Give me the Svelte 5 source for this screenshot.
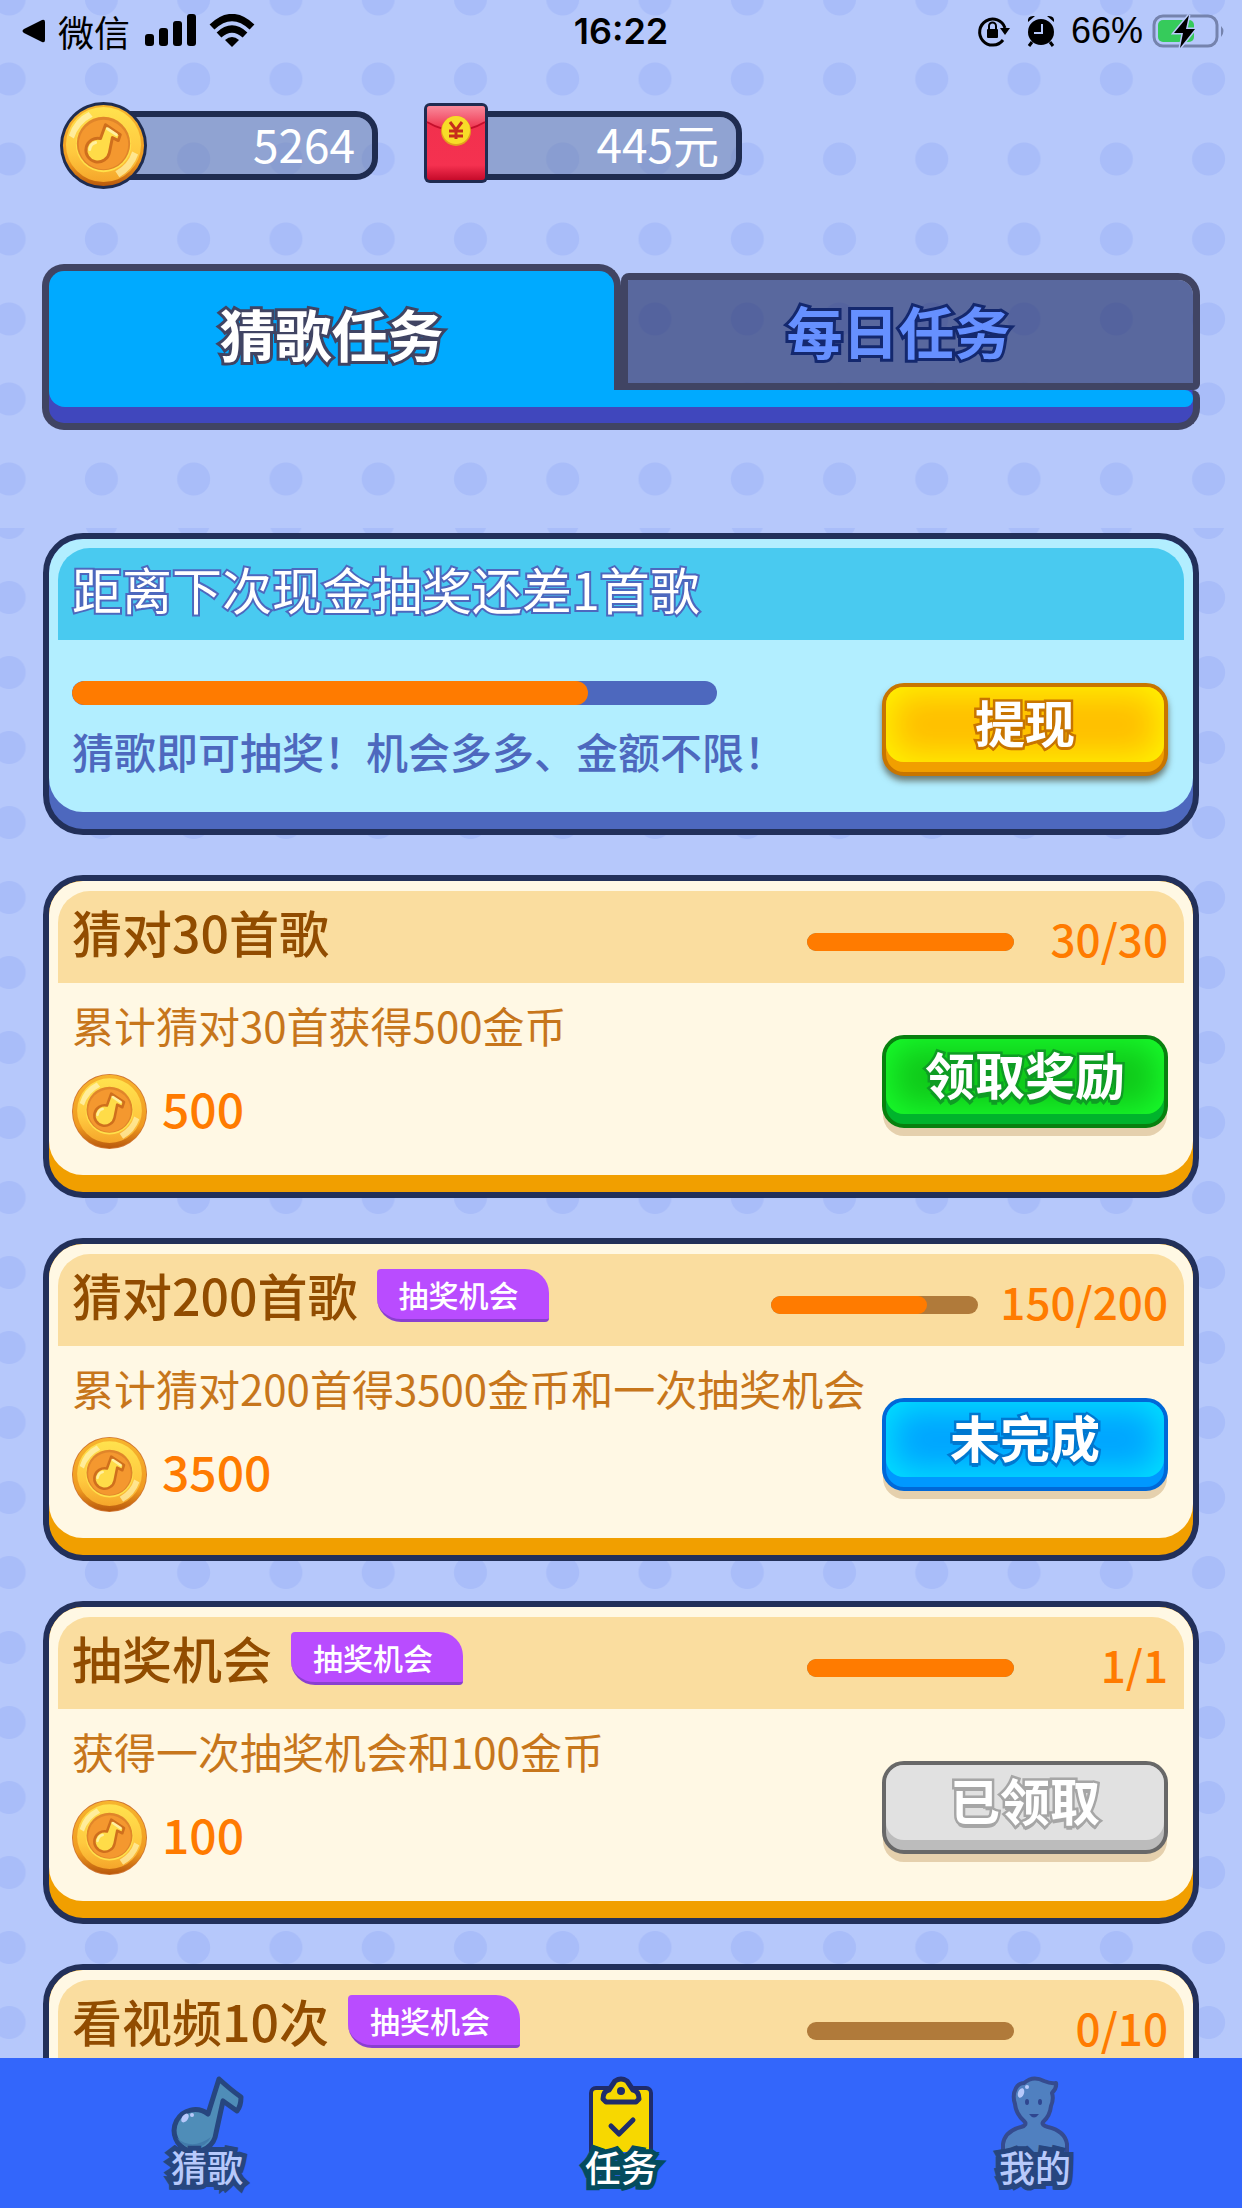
<script>
  let activeTab = $state("songs");

  const tasks = [
    {
      title: "猜对30首歌",
      desc: "累计猜对30首获得500金币",
      coins: 500,
      done: 30,
      total: 30,
      draw: false,
      action: "领取奖励",
      color: "green",
    },
    {
      title: "猜对200首歌",
      desc: "累计猜对200首得3500金币和一次抽奖机会",
      coins: 3500,
      done: 150,
      total: 200,
      draw: true,
      action: "未完成",
      color: "blue",
    },
    {
      title: "抽奖机会",
      desc: "获得一次抽奖机会和100金币",
      coins: 100,
      done: 1,
      total: 1,
      draw: true,
      action: "已领取",
      color: "grey",
    },
    {
      title: "看视频10次",
      done: 0,
      total: 10,
      draw: true,
    },
  ];
</script>

{#snippet coin(rim)}
  <svg class="coin" viewBox="0 0 88 88" aria-hidden="true">
    <circle cx="44" cy="44" r="44" fill={rim} />
    <circle cx="44" cy="44" r={rim === "#1f2c50" ? 41 : 43} fill="url(#coin-edge)" />
    <circle cx="44" cy="43" r="38" fill="url(#coin-face)" />
    <path d="M9 34 Q14 17 29 10 L33 15 Q19 22 14 37 Z" fill="#fff3b0" opacity="0.8" />
    <path d="M79 53 Q74 68 60 76 L56 70 Q69 63 73 50 Z" fill="#fff3b0" opacity="0.7" />
    <circle cx="44" cy="43" r="28" fill="#ffe04a" />
    <circle cx="44" cy="42" r="27" fill="#e0852a" />
    <circle cx="44" cy="43" r="25" fill="#f4982f" />
    <path
      d="M46 23 L61 33 L59 39 L53 36 L50 51 A12 12 0 1 1 41 37 Z"
      fill="#ffdc48"
      stroke="#cf6f1d"
      stroke-width="3"
      stroke-linejoin="round"
    />
    <path d="M30 48 Q31 42 36 41" fill="none" stroke="#fff0a0" stroke-width="3" stroke-linecap="round" />
    <path d="M48 27 L57 33" stroke="#fff0a0" stroke-width="3" stroke-linecap="round" />
  </svg>
{/snippet}

{#snippet bar(value, max, label)}
  <div
    class="bar"
    role="progressbar"
    aria-label={label}
    aria-valuenow={value}
    aria-valuemin="0"
    aria-valuemax={max}
  >
    <div class="fill" style="width: {(value / max) * 100}%"></div>
  </div>
{/snippet}

<svg class="defs" aria-hidden="true">
  <linearGradient id="coin-edge" x1="0" y1="0" x2="0" y2="1">
    <stop offset="0" stop-color="#f7b52e" />
    <stop offset="0.7" stop-color="#f09a20" />
    <stop offset="1" stop-color="#b9590c" />
  </linearGradient>
  <linearGradient id="coin-face" x1="0" y1="0" x2="0" y2="1">
    <stop offset="0" stop-color="#ffe24e" />
    <stop offset="0.6" stop-color="#ffc93f" />
    <stop offset="1" stop-color="#f5a52a" />
  </linearGradient>
  <linearGradient id="packet" x1="0" y1="0" x2="0" y2="1">
    <stop offset="0" stop-color="#f0304c" />
    <stop offset="0.8" stop-color="#f53150" />
    <stop offset="1" stop-color="#c60a2a" />
  </linearGradient>
  <linearGradient id="flap" x1="0" y1="0" x2="0" y2="1">
    <stop offset="0" stop-color="#f98a9b" />
    <stop offset="1" stop-color="#ee2c48" />
  </linearGradient>
</svg>

<div class="app">
  <header>
    <div class="status">
      <div class="side">
        <svg class="back" viewBox="0 0 24 24" aria-hidden="true">
          <path d="M2 10 L20 1 Q23 0 23 3 V21 Q23 24 20 23 L2 14 Q-1 12 2 10 Z" />
        </svg>
        <span>微信</span>
        <svg class="signal" viewBox="0 0 52 34" aria-hidden="true">
          <rect x="0" y="20" width="9" height="12" rx="3" />
          <rect x="14" y="14" width="9" height="18" rx="3" />
          <rect x="28" y="7" width="9" height="25" rx="3" />
          <rect x="42" y="0" width="9" height="32" rx="3" />
        </svg>
        <svg class="wifi" viewBox="0 0 46 34" aria-hidden="true">
          <g fill="none" stroke="#000" stroke-width="7">
            <path d="M3 13 Q23 -6 43 13" />
            <path d="M10 21 Q23 9 36 21" />
          </g>
          <path d="M16 26 Q23 20 30 26 L23 33 Z" />
        </svg>
      </div>
      <time>16:22</time>
      <div class="side end">
        <svg class="lock" viewBox="0 0 34 32" aria-hidden="true">
          <path d="M26 25 A13 13 0 1 1 28 13" fill="none" stroke="#000" stroke-width="3" />
          <path d="M23 13 H33 L28 20 Z" />
          <rect x="10" y="14" width="11" height="9" rx="1" />
          <path d="M12 14 V11 A3 3 0 0 1 19 11 V14" fill="none" stroke="#000" stroke-width="2" />
        </svg>
        <svg class="alarm" viewBox="0 0 28 32" aria-hidden="true">
          <circle cx="14" cy="17" r="13" />
          <path d="M1 7 Q0 0 8 1 Z M27 7 Q28 0 20 1 Z" />
          <path d="M5 27 L2 31 M23 27 L26 31" stroke="#000" stroke-width="3" />
          <path d="M15 9 V18 H7" fill="none" stroke="#b7c9fb" stroke-width="2" />
        </svg>
        <span class="percent">66%</span>
        <svg class="battery" viewBox="0 0 74 36" aria-hidden="true">
          <rect x="2" y="3" width="63" height="30" rx="9" fill="none" stroke="#7583ad" stroke-width="3" />
          <path d="M69 13 Q74 18 69 24 Z" fill="#7583ad" />
          <rect x="6" y="7" width="36" height="22" rx="5" fill="#36cb5b" />
          <path
            d="M37 2 L22 20 H31 L28 35 L43 16 H34 Z"
            stroke="#b7c9fb"
            stroke-width="3"
            paint-order="stroke"
          />
        </svg>
      </div>
    </div>

    <div class="wallets">
      <div class="wallet">
        {@render coin("#1f2c50")}
        <span class="amount">5264</span>
      </div>
      <div class="wallet">
        <svg class="packet" viewBox="0 0 64 80" aria-hidden="true">
          <rect x="0" y="0" width="64" height="80" rx="6" fill="#1f2c50" />
          <rect x="3" y="3" width="58" height="74" rx="3" fill="url(#packet)" />
          <path d="M3 6 Q3 3 6 3 H58 Q61 3 61 6 V19 Q32 36 3 19 Z" fill="url(#flap)" />
          <path d="M3 19 Q32 36 61 19" fill="none" stroke="#c40f2c" stroke-width="2" />
          <circle cx="32" cy="28" r="15" fill="#e2a21c" />
          <circle cx="32" cy="27" r="14" fill="#f8dc28" />
          <path
            d="M26 19 L32 27 L38 19 M32 27 V36 M25 28 H39 M25 33 H39"
            fill="none"
            stroke="#c62d1c"
            stroke-width="3"
          />
        </svg>
        <span class="amount">445元</span>
      </div>
    </div>

    <div class="tabs">
      <div class="tablist" role="tablist">
        <button
          class="tab"
          class:active={activeTab === "songs"}
          role="tab"
          aria-selected={activeTab === "songs"}
          onclick={() => (activeTab = "songs")}>猜歌任务</button
        >
        <button
          class="tab"
          class:active={activeTab === "daily"}
          role="tab"
          aria-selected={activeTab === "daily"}
          onclick={() => (activeTab = "daily")}>每日任务</button
        >
      </div>
      <div class="shelf"><div></div></div>
    </div>
  </header>

  <main>
    <section class="card cash">
      <div class="face">
        <div class="head"><h2>距离下次现金抽奖还差1首歌</h2></div>
        <div class="body">
          <div class="info">
            {@render bar(4, 5, "抽奖进度")}
            <p>猜歌即可抽奖！机会多多、金额不限！</p>
          </div>
          <button class="action yellow"><span>提现</span></button>
        </div>
      </div>
    </section>

    {#each tasks as task}
      <section class="card">
        <div class="face">
          <div class="head">
            <h2>{task.title}</h2>
            {#if task.draw}
              <span class="badge">抽奖机会</span>
            {/if}
            <div class="progress">
              {@render bar(task.done, task.total, task.title)}
              <span class="count">{task.done}/{task.total}</span>
            </div>
          </div>
          {#if task.desc}
            <div class="body">
              <div class="info">
                <p>{task.desc}</p>
                <div class="reward">
                  {@render coin("#cf7430")}
                  <span>{task.coins}</span>
                </div>
              </div>
              <button class="action {task.color}"><span>{task.action}</span></button>
            </div>
          {/if}
        </div>
      </section>
    {/each}
  </main>

  <nav>
    <a href="#guess">
      <svg class="note" viewBox="0 0 74 76" aria-hidden="true">
        <path
          d="M49 3 Q61 14 71 21 Q71 30 67 35 L53 25 L46 57 A21 21 0 1 1 38 38 Z"
          fill="#4f8db8"
          stroke="#27467f"
          stroke-width="5"
          stroke-linejoin="round"
        />
        <path d="M7 62 Q22 75 41 61 Q36 71 24 72 Q13 72 7 62" fill="#427bab" />
        <ellipse cx="15" cy="42" rx="3" ry="5" fill="#b7c9fb" transform="rotate(35 15 42)" />
        <circle cx="22" cy="39" r="2" fill="#b7c9fb" />
      </svg>
      <span>猜歌</span>
    </a>
    <a href="#tasks" class="current" aria-current="page">
      <svg class="board" viewBox="0 0 64 76" aria-hidden="true">
        <rect x="2" y="12" width="60" height="70" rx="5" fill="#f7d800" stroke="#1f2c6b" stroke-width="4" />
        <path
          d="M14 23 Q14 15 20 14 L26 5 Q32 1 38 5 L44 14 Q50 15 50 23 L47 26 H17 Z"
          fill="#f7d800"
          stroke="#1f2c6b"
          stroke-width="5"
          stroke-linejoin="round"
        />
        <circle cx="32" cy="15" r="4" fill="#1f2c6b" />
        <path
          d="M22 50 L30 58 L44 44"
          fill="none"
          stroke="#1f2c6b"
          stroke-width="5"
          stroke-linecap="round"
          stroke-linejoin="round"
        />
      </svg>
      <span>任务</span>
    </a>
    <a href="#me">
      <svg class="person" viewBox="0 0 68 76" aria-hidden="true">
        <path
          d="M2 78 V68 Q4 55 20 51 Q27 49 23 45 Q15 38 14 28 Q11 19 15 12 Q18 7 23 7 Q32 -1 43 5 Q50 8 55 7 Q56 12 51 17 Q53 23 50 30 Q49 40 42 46 Q40 49 47 51 Q64 55 66 68 V78 Z"
          fill="#5080c0"
          stroke="#354b8f"
          stroke-width="4"
          stroke-linejoin="round"
        />
        <ellipse cx="26" cy="26" rx="2" ry="3" fill="#2f4690" />
        <ellipse cx="39" cy="26" rx="2" ry="3" fill="#2f4690" />
        <path d="M28 38 H38 Q33 45 28 38 Z" fill="#2f4690" />
        <ellipse cx="20" cy="17" rx="3" ry="5" fill="#b7c9fb" transform="rotate(20 20 17)" />
        <circle cx="26" cy="11" r="2" fill="#b7c9fb" />
      </svg>
      <span>我的</span>
    </a>
  </nav>
</div>

<style>
  :global(body) {
    margin: 0;
  }
  .defs {
    position: absolute;
    width: 0;
    height: 0;
  }
  .app {
    height: 100vh;
    display: flex;
    flex-direction: column;
    overflow: hidden;
    font-family: "Noto Sans CJK SC", sans-serif;
    background-color: #b6c8fb;
  }
  .app * {
    box-sizing: border-box;
  }
  header,
  main {
    background-color: #b6c8fb;
    background-image: radial-gradient(circle, #a9bdf9 16px, transparent 17px);
    background-size: 7.43% 80px;
    background-position: -37px 39px;
  }
  header {
    flex: none;
    padding-bottom: 98px;
  }

  .status {
    display: flex;
    align-items: center;
    height: 62px;
    padding: 0 16px;
    font-size: 36px;
    line-height: 40px;
  }
  .side {
    flex: 1;
    display: flex;
    align-items: center;
  }
  .end {
    justify-content: flex-end;
  }
  .back {
    width: 24px;
    height: 24px;
    margin: 0 12px 0 6px;
  }
  .signal {
    width: 52px;
    height: 34px;
    margin: 0 12px 0 15px;
  }
  .wifi {
    width: 46px;
    height: 34px;
  }
  time {
    font-family: Inter, sans-serif;
    font-weight: 600;
  }
  .lock {
    width: 34px;
    height: 32px;
    margin-right: 16px;
  }
  .alarm {
    width: 28px;
    height: 32px;
    margin-right: 16px;
  }
  .percent {
    font-family: "Liberation Sans", sans-serif;
  }
  .battery {
    width: 74px;
    height: 36px;
    margin-left: 9px;
  }

  .wallets {
    display: flex;
    gap: 46px;
    padding: 40px 60px 0;
  }
  .wallet {
    display: flex;
    align-items: center;
    width: 318px;
    height: 87px;
  }
  .wallet .coin {
    width: 87px;
    height: 87px;
  }
  .wallet svg {
    position: relative;
    z-index: 1;
    flex: none;
  }
  .wallet .packet {
    width: 64px;
    height: 80px;
    margin-bottom: 6px;
  }
  .amount {
    flex: 1;
    height: 69px;
    margin-left: -20px;
    padding-right: 17px;
    border: 6px solid #1f2c50;
    border-radius: 0 22px 22px 0;
    background: rgba(98, 118, 160, 0.45);
    background-clip: padding-box;
    color: #fff;
    font-size: 46px;
    line-height: 52px;
    text-align: right;
  }

  .tabs {
    margin: 75px 42px 0;
  }
  .tablist {
    display: flex;
    align-items: flex-end;
    height: 126px;
  }
  .tab {
    flex: none;
    width: 50%;
    height: 117px;
    margin: 0;
    padding: 0 24px 4px 0;
    border: 7px solid #404463;
    border-radius: 8px 22px 6px 0;
    background: rgba(22, 34, 92, 0.58);
    background-clip: padding-box;
    color: #6690ff;
    font-family: inherit;
    font-size: 56px;
    font-weight: 700;
    line-height: 64px;
    -webkit-text-stroke: 6px #14286e;
    paint-order: stroke fill;
  }
  .tab.active {
    height: 126px;
    padding: 4px 0 0;
    border-bottom: 0;
    border-radius: 22px 22px 0 0;
    background: #00aaff;
    color: #fff;
    -webkit-text-stroke-color: #404463;
  }
  .shelf {
    height: 40px;
    border: 7px solid #404463;
    border-top: 0;
    border-radius: 0 8px 22px 22px;
    background: #4047bd;
  }
  .shelf div {
    height: 17px;
    border-radius: 0 8px 8px 16px;
    background: #00aaff;
  }

  main {
    flex: 1;
    min-height: 0;
    overflow: hidden;
    display: flex;
    flex-direction: column;
    gap: 40px;
    padding: 5px 43px 0;
    background-size: 7.43% 75px;
    background-position: -37px -43px;
  }
  .card {
    flex: none;
    padding-bottom: 17px;
    border: 6px solid #22305a;
    border-radius: 40px;
    background: #f19f00;
  }
  .face {
    height: 294px;
    padding: 10px 9px 0;
    border-radius: 34px;
    background: #fff8e4;
  }
  .head {
    display: flex;
    align-items: center;
    height: 92px;
    padding: 0 16px 0 14px;
    border-radius: 32px 32px 0 0;
    background: #fadd9f;
  }
  h2 {
    margin: 0;
    padding-bottom: 12px;
    color: #914c00;
    font-size: 50px;
    font-weight: 500;
    line-height: 60px;
    white-space: nowrap;
  }
  .badge {
    height: 53px;
    margin: 0 0 10px 19px;
    padding: 0 30px 0 22px;
    border-bottom: 3px solid #8a3fd0;
    border-radius: 4px 24px 4px 24px;
    background: #b94cff;
    color: #fff;
    font-size: 30px;
    font-weight: 500;
    line-height: 50px;
  }
  .progress {
    display: flex;
    align-items: center;
    margin-left: auto;
    padding-top: 10px;
  }
  .bar {
    width: 207px;
    height: 18px;
    border-radius: 9px;
    overflow: hidden;
    background: #b07a3a;
  }
  .fill {
    height: 100%;
    border-radius: inherit;
    background: #ff7b00;
  }
  .count {
    min-width: 132px;
    margin-left: 22px;
    padding-bottom: 8px;
    color: #ff7b00;
    font-size: 44px;
    font-weight: 500;
    line-height: 48px;
    text-align: right;
  }
  .body {
    display: flex;
    align-items: flex-start;
    justify-content: space-between;
    padding: 12px 16px 0 14px;
  }
  p {
    margin: 0;
    color: #c7761b;
    font-size: 42px;
    line-height: 60px;
    white-space: nowrap;
  }
  .reward {
    display: flex;
    align-items: center;
    gap: 15px;
    margin-top: 19px;
    color: #ff7b00;
    font-size: 48px;
    font-weight: 500;
    line-height: 60px;
  }
  .reward span {
    padding-bottom: 10px;
  }
  .reward .coin {
    width: 75px;
    height: 75px;
  }

  .cash {
    background: #4d68be;
  }
  .cash .face {
    height: 273px;
    padding-top: 9px;
    background: #b2eeff;
  }
  .cash .head {
    background: #49caf0;
  }
  .cash h2 {
    color: #fff;
    font-weight: 400;
    -webkit-text-stroke: 4px #4d68be;
    paint-order: stroke fill;
  }
  .cash .body {
    padding-top: 41px;
  }
  .cash .bar {
    width: 645px;
    height: 24px;
    margin-bottom: 16px;
    border-radius: 12px;
    background: #4d68be;
  }
  .cash p {
    color: #4d68be;
    font-weight: 500;
  }

  .action {
    flex: none;
    width: 286px;
    margin: 40px 0 0;
    padding: 0 0 10px;
    border: 4px solid;
    border-radius: 22px;
    color: #fff;
    font-family: inherit;
    font-size: 50px;
    font-weight: 700;
    box-shadow: 0 9px 0 -1px #e5d0ad;
  }
  .action span {
    display: block;
    height: 75px;
    border-radius: 18px;
    line-height: 68px;
    paint-order: stroke fill;
    -webkit-text-stroke: 5px;
  }
  .action.yellow {
    margin-top: 2px;
    border-color: #c87500;
    background: #f19f00;
    box-shadow: 0 5px 6px rgba(60, 50, 30, 0.6);
  }
  .yellow span {
    background: #ffbe00;
    box-shadow: inset 0 0 34px 6px #fff600;
    -webkit-text-stroke-color: #c87500;
    text-shadow: 0 3px 0 #c87500;
  }
  .green {
    border-color: #08800f;
    background: #00b42c;
  }
  .green span {
    background: #10c81a;
    box-shadow: inset 0 0 34px 6px #18ff2c;
    -webkit-text-stroke-color: #0f9c24;
    text-shadow: 0 5px 0 #0f9c24;
  }
  .blue {
    border-color: #0068d8;
    background: #0098ff;
  }
  .blue span {
    background: #00a4ff;
    box-shadow: inset 0 0 34px 6px #00e4ff;
    -webkit-text-stroke-color: #0078d0;
    text-shadow: 0 4px 0 #0078d0;
  }
  .grey {
    border-color: #686868;
    background: #bcbcbc;
  }
  .grey span {
    background: #e1e1e1;
    -webkit-text-stroke-color: #a6a6a6;
    text-shadow: 0 4px 0 #a6a6a6;
  }

  nav {
    flex: none;
    display: flex;
    height: 150px;
    background: #3366fb;
  }
  nav a {
    flex: 1;
    display: flex;
    flex-direction: column;
    align-items: center;
    padding-top: 18px;
    color: #b7c9fb;
    font-size: 36px;
    font-weight: 500;
    line-height: 40px;
    text-decoration: none;
  }
  nav svg {
    flex: none;
    height: 76px;
  }
  nav span {
    position: relative;
    margin-top: -6px;
    -webkit-text-stroke: 10px #27467f;
    paint-order: stroke fill;
  }
  nav .current {
    color: #fff;
  }
  .current span {
    -webkit-text-stroke-color: #044c5e;
  }
  .note {
    width: 74px;
  }
  .board {
    width: 64px;
  }
  .person {
    width: 68px;
  }
</style>
